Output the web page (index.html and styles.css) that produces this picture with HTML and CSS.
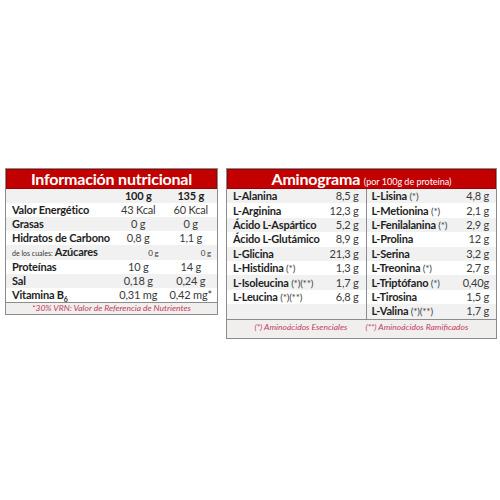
FILE: index.html
```html
<!DOCTYPE html>
<html lang="es">
<head>
  <meta charset="UTF-8">
  <title>Información nutricional</title>
  <link rel="stylesheet" href="styles.css">
</head>
<body>
  <div class="page">
    <div class="box nutri">
      <div class="top">Información nutricional</div>
      <table>
        <tr class="head">
          <td></td><td class="val">100 g</td><td class="val">135 g</td>
        </tr>
        <tr><td class="lbl">Valor Energético</td><td class="val">43 Kcal</td><td class="val">60 Kcal</td></tr>
        <tr><td class="lbl">Grasas</td><td class="val">0 g</td><td class="val">0 g</td></tr>
        <tr><td class="lbl">Hidratos de Carbono</td><td class="val">0,8 g</td><td class="val">1,1 g</td></tr>
        <tr class="sub"><td class="lbl"><span class="tiny">de los cuales:</span> Azúcares</td><td class="val small">0 g</td><td class="val small">0 g</td></tr>
        <tr><td class="lbl">Proteínas</td><td class="val">10 g</td><td class="val">14 g</td></tr>
        <tr><td class="lbl">Sal</td><td class="val">0,18 g</td><td class="val">0,24 g</td></tr>
        <tr><td class="lbl">Vitamina B<sub>6</sub></td><td class="val">0,31 mg</td><td class="val">0,42 mg*</td></tr>
      </table>
      <div class="note">*30% VRN: Valor de Referencia de Nutrientes</div>
    </div>

    <div class="box amino">
      <div class="top">Aminograma <span class="per">(por 100g de proteína)</span></div>
      <table>
        <tr><td class="lbl">L-Alanina</td><td class="val sep">8,5 g</td><td class="lbl">L-Lisina <i>(*)</i></td><td class="val">4,8 g</td></tr>
        <tr><td class="lbl">L-Arginina</td><td class="val sep">12,3 g</td><td class="lbl">L-Metionina <i>(*)</i></td><td class="val">2,1 g</td></tr>
        <tr><td class="lbl">Ácido L-Aspártico</td><td class="val sep">5,2 g</td><td class="lbl">L-Fenilalanina <i>(*)</i></td><td class="val">2,9 g</td></tr>
        <tr><td class="lbl">Ácido L-Glutámico</td><td class="val sep">8,9 g</td><td class="lbl">L-Prolina</td><td class="val">12 g</td></tr>
        <tr><td class="lbl">L-Glicina</td><td class="val sep">21,3 g</td><td class="lbl">L-Serina</td><td class="val">3,2 g</td></tr>
        <tr><td class="lbl">L-Histidina <i>(*)</i></td><td class="val sep">1,3 g</td><td class="lbl">L-Treonina <i>(*)</i></td><td class="val">2,7 g</td></tr>
        <tr><td class="lbl">L-Isoleucina <i>(*)(**)</i></td><td class="val sep">1,7 g</td><td class="lbl">L-Triptófano <i>(*)</i></td><td class="val">0,40g</td></tr>
        <tr><td class="lbl">L-Leucina <i>(*)(**)</i></td><td class="val sep">6,8 g</td><td class="lbl">L-Tirosina</td><td class="val">1,5 g</td></tr>
        <tr><td class="lbl"></td><td class="val sep"></td><td class="lbl">L-Valina <i>(*)(**)</i></td><td class="val">1,7 g</td></tr>
      </table>
      <div class="note">(*) Aminoácidos Esenciales <span class="gap"></span>(**) Aminoácidos Ramificados</div>
    </div>
  </div>
</body>
</html>
```
FILE: styles.css
```css
* {
  margin: 0;
  padding: 0;
}
body {
  background: #fff;
  font-family: Lato, "Liberation Sans", sans-serif;
  color: #1e1e1e;
}
.page {
  display: flex;
  align-items: flex-start;
  gap: 8px;
  padding: 168px 0 0 5px;
}
.box {
  border: 1px solid #8c8c8c;
  background: #fff;
}
.nutri {
  width: 211px;
}
.amino {
  width: 269px;
}
.top {
  height: 20px;
  line-height: 20px;
  background: #c20000;
  box-shadow: inset 0 0 0 1px #9a0000;
  color: #fff;
  font-weight: bold;
  font-size: 16px;
  text-align: center;
  letter-spacing: -0.2px;
}
.top .per {
  font-size: 9px;
  font-weight: normal;
  letter-spacing: 0;
}
table {
  width: 100%;
  border-collapse: collapse;
  table-layout: fixed;
}
td {
  box-sizing: border-box;
  height: 14px;
  padding: 0;
  font-size: 11px;
  line-height: 14px;
  white-space: nowrap;
}
tr:nth-child(odd) {
  background: #f1f1f1;
}
.lbl {
  font-weight: bold;
  padding-left: 6px;
  letter-spacing: -0.2px;
}
.lbl i {
  font-style: normal;
  font-weight: normal;
  font-size: 10px;
  color: #444;
}
.val {
  color: #3a3a3a;
  letter-spacing: -0.2px;
}
.tiny {
  font-size: 7px;
  font-weight: normal;
  color: #333;
  letter-spacing: 0;
}
sub {
  font-size: 7px;
  line-height: 0;
}

/* tabla nutricional */
.nutri td:first-child {
  width: 106px;
}
.nutri .val {
  text-align: center;
}
.nutri .head .val {
  font-weight: bold;
  color: #1e1e1e;
}
.nutri .val.small {
  font-size: 8px;
  text-align: right;
  padding-right: 6px;
  vertical-align: bottom;
}

/* aminograma */
.amino td {
  height: 14.4px;
}
.amino td:nth-child(1) {
  width: 97px;
}
.amino td:nth-child(2) {
  width: 42px;
}
.amino td:nth-child(3) {
  width: 89px;
  padding-left: 5px;
}
.amino .val {
  text-align: right;
  padding-right: 7px;
}
.amino .val.sep {
  border-right: 1px solid #8c8c8c;
}

.note {
  height: 11px;
  line-height: 11px;
  border-top: 1px solid #8c8c8c;
  background: #f1eeee;
  color: #c0405e;
  font-style: italic;
  font-size: 8.5px;
  text-align: center;
}
.amino .note {
  height: 18px;
  line-height: 14px;
}
.note .gap {
  display: inline-block;
  width: 16px;
}
```
